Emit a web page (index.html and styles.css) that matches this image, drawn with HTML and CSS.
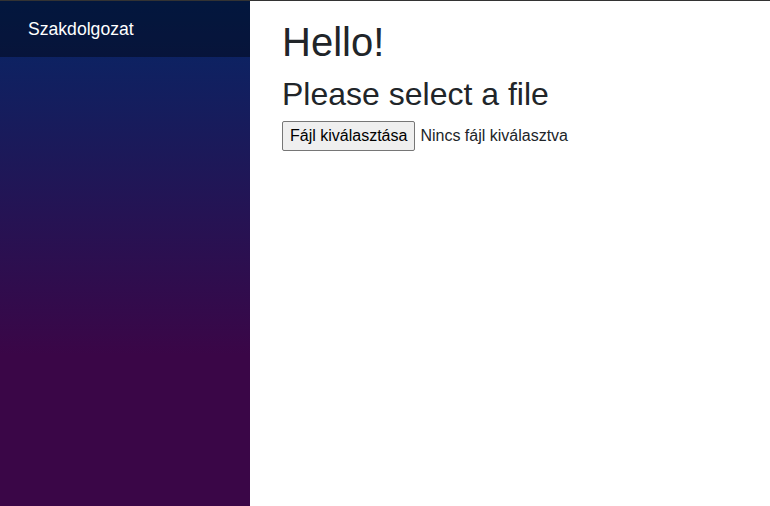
FILE: index.html
```html
<!DOCTYPE html>
<html lang="hu">
<head>
<meta charset="utf-8">
<title>Szakdolgozat</title>
<link rel="stylesheet" href="styles.css">
</head>
<body>
<div class="page">
  <aside class="sidebar">
    <div class="top-row">
      <a class="brand" href="#">Szakdolgozat</a>
    </div>
  </aside>
  <main class="main">
    <article class="content">
      <h1>Hello!</h1>
      <h2>Please select a file</h2>
      <div class="file-input">
        <button class="file-btn" type="button">Fájl kiválasztása</button>
        <span class="file-name">Nincs fájl kiválasztva</span>
      </div>
    </article>
  </main>
</div>
</body>
</html>
```
FILE: styles.css
```css
html, body {
  margin: 0;
  padding: 0;
  height: 100%;
}
body {
  font-family: "Liberation Sans", Arial, Helvetica, sans-serif;
  color: #212529;
  background: #fff;
  border-top: 1px solid #333;
  box-sizing: border-box;
}
.page {
  display: flex;
  height: 100%;
}
.sidebar {
  width: 250px;
  flex-shrink: 0;
  background-image: linear-gradient(180deg, rgb(5, 39, 103) 0%, #3a0647 70%);
}
.top-row {
  height: 56px;
  background-color: rgba(0, 0, 0, 0.4);
  display: flex;
  align-items: center;
  padding-left: 28px;
}
.brand {
  color: #fff;
  text-decoration: none;
  font-size: 17.6px;
  line-height: 1.5;
}
.main {
  flex: 1;
}
.content {
  padding: 17px 32px 0 32px;
}
h1 {
  margin: 0 0 9px 0;
  font-size: 40px;
  font-weight: 400;
  line-height: 1.2;
}
h2 {
  margin: 0 0 8px 0;
  font-size: 32px;
  font-weight: 400;
  line-height: 1.2;
}
.file-input {
  display: flex;
  align-items: center;
  gap: 5px;
  font-size: 16px;
}
.file-btn {
  font-family: "Liberation Sans", Arial, sans-serif;
  font-size: 16px;
  color: #000;
  background: #efefef;
  border: 1px solid #767676;
  border-radius: 2px;
  padding: 0 7px;
  height: 30px;
  line-height: 28px;
}
.file-name {
  color: #212529;
}
```
